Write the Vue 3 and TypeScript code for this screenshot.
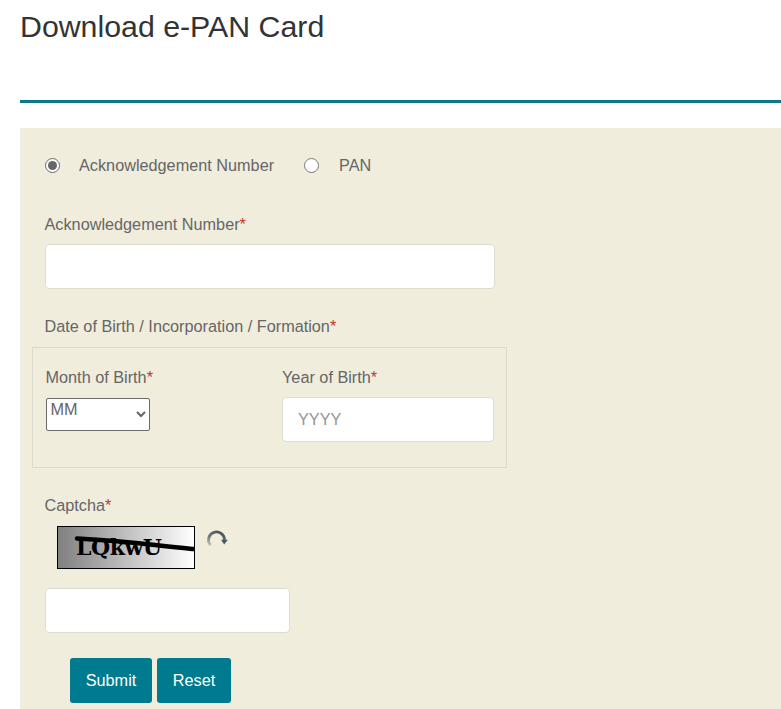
<script setup lang="ts">
import { ref } from 'vue'
const mode = ref('ack')
</script>

<template>
  <div class="page">
    <h1 class="title">Download e-PAN Card</h1>
    <div class="rule"></div>
    <form class="panel" @submit.prevent>
      <div class="radios">
        <label class="radio"><input v-model="mode" type="radio" value="ack" /><span>Acknowledgement Number</span></label>
        <label class="radio second"><input v-model="mode" type="radio" value="pan" /><span>PAN</span></label>
      </div>
      <label class="lab ack-lab">Acknowledgement Number<em>*</em></label>
      <input class="field ack" type="text" />
      <label class="lab dob-lab">Date of Birth / Incorporation / Formation<em>*</em></label>
      <div class="dob">
        <div class="month">
          <label class="lab">Month of Birth<em>*</em></label>
          <select class="sel"><option>MM</option></select>
        </div>
        <div class="year">
          <label class="lab">Year of Birth<em>*</em></label>
          <input class="field yr" type="text" placeholder="YYYY" />
        </div>
      </div>
      <label class="lab cap-lab">Captcha<em>*</em></label>
      <div class="cap-row">
        <div class="captcha">
          <span class="cap-text">LQkwU</span>
          <svg class="cap-line" width="136" height="41" viewBox="0 0 136 41">
            <path d="M19 11.5 C45 13 70 15 97 18 S125 21 136 22" fill="none" stroke="#000" stroke-width="4.5" stroke-linecap="round" />
          </svg>
        </div>
        <svg class="refresh" width="24" height="22" viewBox="0 0 24 22">
          <defs>
            <linearGradient id="fade" x1="0" y1="1" x2="0.6" y2="0">
              <stop offset="0" stop-color="#c9c9c4" />
              <stop offset="0.5" stop-color="#6d787c" />
              <stop offset="1" stop-color="#4d585c" />
            </linearGradient>
          </defs>
          <path d="M4.5 17.3 A8 8 0 1 1 18.5 12" fill="none" stroke="url(#fade)" stroke-width="2.8" />
          <path d="M15 11.8 L21.8 11.8 L18.2 16.6 Z" fill="#4d585c" />
        </svg>
      </div>
      <input class="field cap" type="text" />
      <div class="btns">
        <button class="btn submit" type="submit">Submit</button>
        <button class="btn reset" type="reset">Reset</button>
      </div>
    </form>
  </div>
</template>

<style>
html, body { margin: 0; padding: 0; background: #fff; overflow: hidden; }
</style>

<style scoped>
.page {
  width: 781px;
  height: 709px;
  overflow: hidden;
  font-family: "Liberation Sans", Arial, sans-serif;
  color: #666;
  font-size: 16.25px;
  box-sizing: border-box;
  padding-left: 20px;
}
.title {
  margin: 0;
  padding-top: 9px;
  font-weight: 400;
  font-size: 30.3px;
  line-height: 36px;
  color: #333;
  height: 91px;
  box-sizing: border-box;
}
.rule { height: 3px; background: #11758a; margin-top: 9px; }
.panel {
  margin-top: 25px;
  height: 600px;
  background: #f0eddd;
  display: flex;
  flex-direction: column;
  align-items: flex-start;
  padding: 0 0 0 12px;
  box-sizing: border-box;
}
.radios { display: flex; margin-top: 28px; margin-left: 13px; height: 18px; align-items: center; }
.radio { display: flex; align-items: center; }
.radio input { margin: 0 19px 0 0; width: 15px; height: 15px; accent-color: #666; }
.radio.second { margin-left: 30px; }
.radio.second input { margin-right: 20px; }
.lab { display: block; line-height: 18px; }
.lab em { color: #c0392b; font-style: normal; }
.ack-lab { margin-top: 41px; margin-left: 12.5px; }
.field {
  display: block;
  box-sizing: border-box;
  height: 45px;
  background: #fff;
  border: 1px solid #dedcd0;
  border-radius: 4px;
  padding: 0 15px;
  font: inherit;
  outline: none;
}
.field::placeholder { color: #969696; opacity: 1; }
.ack { margin: 11px 0 0 13px; width: 450px; }
.dob-lab { margin-top: 28px; margin-left: 12.5px; }
.dob {
  box-sizing: border-box;
  width: 475px;
  height: 121px;
  margin-top: 12px;
  border: 1px solid #dcdacd;
  display: flex;
  padding: 20px 0 0 12.5px;
}
.month { width: 236.5px; }
.sel {
  display: block;
  width: 104px;
  height: 33px;
  margin-top: 12px;
  box-sizing: border-box;
  font: inherit;
  color: #666;
  background: #fff;
  border: 1px solid #6b6b6b;
  border-radius: 2px;
  padding: 0 0 11px 0;
}
.yr { width: 212px; margin-top: 11px; }
.cap-lab { margin-top: 28px; margin-left: 12.5px; }
.cap-row { display: flex; align-items: flex-start; margin: 12px 0 0 25px; }
.captcha {
  position: relative;
  box-sizing: border-box;
  width: 138px;
  height: 43px;
  border: 1px solid #000;
  background: linear-gradient(90deg, #808080, #fff);
  overflow: hidden;
}
.cap-text {
  position: absolute;
  left: 18px;
  top: 5px;
  font-family: "DejaVu Serif", serif;
  font-weight: 700;
  font-size: 22px;
  line-height: 30px;
  letter-spacing: -0.5px;
  color: #000;
}
.cap-line { position: absolute; left: 0; top: 0; }
.refresh { margin: 2px 0 0 11px; }
.cap { width: 245px; margin: 19px 0 0 13px; }
.btns { display: flex; gap: 5px; margin: 25px 0 0 38px; }
.btn {
  height: 45px;
  background: #007a8e;
  color: #fff;
  border: none;
  border-radius: 3px;
  font: inherit;
  padding: 0;
}
.submit { width: 82px; }
.reset { width: 74px; }
</style>
